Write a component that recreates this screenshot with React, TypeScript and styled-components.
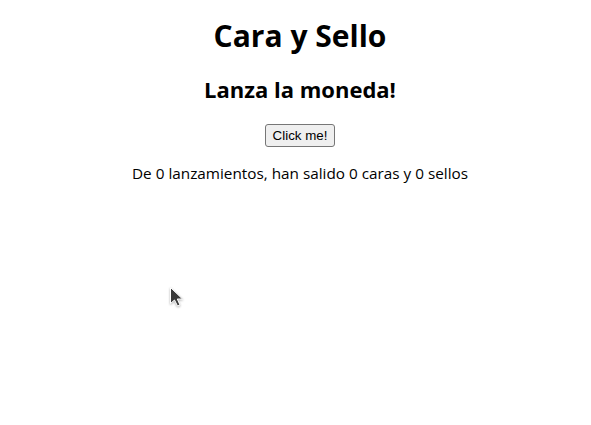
import React from "react";
import styled, { createGlobalStyle } from "styled-components";

const Global = createGlobalStyle`
  html, body { margin: 0; padding: 0; background: #ffffff; }
  body { font-family: "Open Sans", "Noto Sans", sans-serif; color: #000; }
`;

const Page = styled.main`
  position: relative;
  width: 591px;
  height: 425px;
  display: flex;
  flex-direction: column;
  align-items: center;
  padding: 17px 0 0 9px;
  box-sizing: border-box;
`;

const Title = styled.h1`
  margin: 0;
  font-size: 30px;
  line-height: 37px;
  font-weight: 700;
`;

const Subtitle = styled.h2`
  margin: 21px 0 0;
  font-size: 22px;
  line-height: 28px;
  font-weight: 700;
`;

const FlipButton = styled.button`
  margin-top: 21px;
  font-family: "Liberation Sans", Arial, sans-serif;
  font-size: 13.333px;
  color: #000;
  background: #efefef;
  border: 1px solid #767676;
  border-radius: 3px;
  padding: 3px 7px;
  line-height: normal;
`;

const Counter = styled.p`
  margin: 16px 0 0;
  font-size: 15.3px;
  line-height: 20px;
`;

const Cursor = styled.svg`
  position: absolute;
  left: 169px;
  top: 286px;
  filter: drop-shadow(0 1px 1px rgba(0, 0, 0, 0.3));
`;

export default function App() {
  const [tosses, setTosses] = React.useState({ total: 0, heads: 0, tails: 0 });
  const flip = () => {
    const heads = Math.random() < 0.5;
    setTosses((t) => ({
      total: t.total + 1,
      heads: t.heads + (heads ? 1 : 0),
      tails: t.tails + (heads ? 0 : 1),
    }));
  };
  return (
    <>
      <Global />
      <Page>
        <Title>Cara y Sello</Title>
        <Subtitle>Lanza la moneda!</Subtitle>
        <FlipButton onClick={flip}>Click me!</FlipButton>
        <Counter>
          De {tosses.total} lanzamientos, han salido {tosses.heads} caras y {tosses.tails} sellos
        </Counter>
        <Cursor width="18" height="24" viewBox="0 0 18 24">
          <path
            d="M1.5 1.5 L1.5 17.5 L5.5 14 L8.5 20 L11 19 L8.3 13 L13.5 13 Z"
            fill="#3a3a3a"
            stroke="#ffffff"
            strokeWidth="1"
            strokeLinejoin="round"
          />
        </Cursor>
      </Page>
    </>
  );
}
